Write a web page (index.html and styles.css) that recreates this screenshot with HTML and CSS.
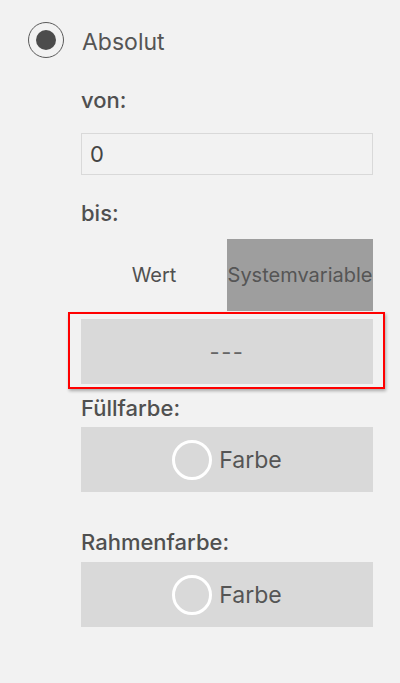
FILE: index.html
```html
<!DOCTYPE html>
<html lang="de">
<head>
<meta charset="utf-8">
<link rel="stylesheet" href="styles.css">
</head>
<body>
<div class="panel">
  <div class="radio-row">
    <span class="radio"><span class="radio-dot"></span></span>
    <span class="radio-label">Absolut</span>
  </div>
  <div class="content">
    <div class="label label-von">von:</div>
    <div class="input">0</div>
    <div class="label label-bis">bis:</div>
    <div class="toggle">
      <div class="tab">Wert</div>
      <div class="tab tab-active">Systemvariable</div>
    </div>
    <div class="select highlighted">---</div>
    <div class="label label-fill">Füllfarbe:</div>
    <div class="color-btn"><span class="swatch"></span><span>Farbe</span></div>
    <div class="label label-border">Rahmenfarbe:</div>
    <div class="color-btn"><span class="swatch"></span><span>Farbe</span></div>
  </div>
</div>
</body>
</html>
```
FILE: styles.css
```css
html, body {
  margin: 0;
  padding: 0;
  background: #f2f2f2;
  font-family: Inter, "Noto Sans", sans-serif;
  color: #505050;
}
.panel {
  width: 400px;
  height: 683px;
  padding-top: 22px;
  box-sizing: border-box;
}
.radio-row {
  display: flex;
  align-items: center;
  height: 36px;
  margin-left: 28px;
}
.radio {
  width: 36px;
  height: 36px;
  box-sizing: border-box;
  border: 1px solid #5a5a5a;
  border-radius: 50%;
  display: flex;
  align-items: center;
  justify-content: center;
}
.radio-dot {
  width: 20px;
  height: 20px;
  border-radius: 50%;
  background: #4c4c4c;
}
.radio-label {
  margin-left: 18px;
  font-size: 23px;
  line-height: 36px;
  padding-top: 3px;
  color: #555;
}
.content {
  margin-left: 81px;
  width: 292px;
}
.label {
  font-size: 22px;
  font-weight: 500;
  line-height: 24px;
  color: #505050;
}
.label-von { margin-top: 30px; }
.label-bis { margin-top: 26px; }
.label-fill { margin-top: 12px; }
.label-border { margin-top: 38px; }
.input {
  margin-top: 21px;
  height: 42px;
  box-sizing: border-box;
  border: 1px solid #d9d9d9;
  padding-left: 8px;
  font-size: 22px;
  line-height: 40px;
  color: #444;
}
.toggle {
  margin-top: 14px;
  display: flex;
  height: 72px;
}
.tab {
  flex: 1;
  display: flex;
  align-items: center;
  justify-content: center;
  font-size: 20px;
  color: #505050;
  white-space: nowrap;
}
.tab-active {
  background: #9e9e9e;
  color: #555;
}
.select {
  margin-top: 8px;
  height: 65px;
  background: #d9d9d9;
  display: flex;
  align-items: center;
  justify-content: center;
  font-size: 22px;
  color: #666;
  letter-spacing: 1.5px;
}
.highlighted {
  position: relative;
}
.highlighted::after {
  content: "";
  position: absolute;
  top: -7px;
  bottom: -5px;
  left: -13px;
  right: -12px;
  border: 2px solid #ff0000;
  box-shadow: 1px 2px 3px rgba(0, 0, 0, 0.3);
  pointer-events: none;
}
.color-btn {
  margin-top: 7px;
  height: 65px;
  background: #d9d9d9;
  display: flex;
  align-items: center;
  justify-content: center;
  gap: 7px;
  font-size: 23px;
  color: #555;
}
.label-border + .color-btn { margin-top: 8px; }
.swatch {
  width: 40px;
  height: 40px;
  box-sizing: border-box;
  border: 3px solid #ffffff;
  border-radius: 50%;
}
```
